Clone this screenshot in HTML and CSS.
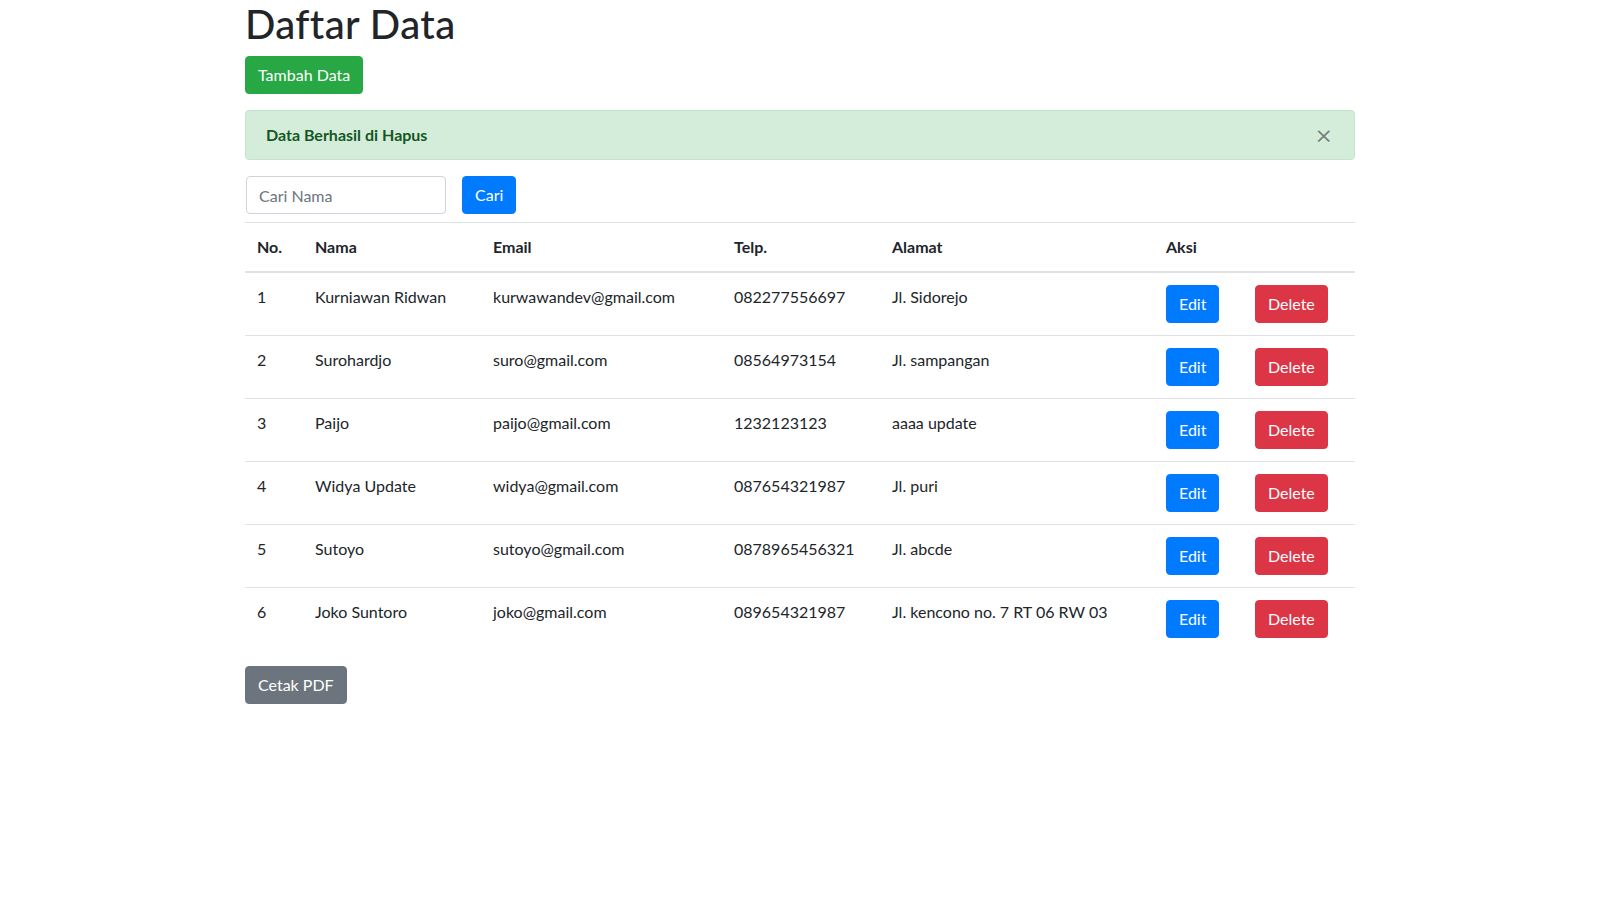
FILE: index.html
```html
<!DOCTYPE html>
<html lang="id">
<head>
<meta charset="utf-8">
<title>Daftar Data</title>
<link rel="stylesheet" href="styles.css">
</head>
<body>
<div class="container">
  <h1 class="title">Daftar Data</h1>
  <a class="btn btn-success">Tambah Data</a>

  <div class="alert">
    <strong>Data Berhasil di Hapus</strong>
    <button class="close" type="button">&times;</button>
  </div>

  <form class="search">
    <input class="form-control" type="text" placeholder="Cari Nama">
    <button class="btn btn-primary" type="button">Cari</button>
  </form>

  <table class="table">
    <colgroup>
      <col class="c-no"><col class="c-nama"><col class="c-email"><col class="c-telp"><col class="c-alamat"><col class="c-edit"><col class="c-del">
    </colgroup>
    <thead>
      <tr><th>No.</th><th>Nama</th><th>Email</th><th>Telp.</th><th>Alamat</th><th colspan="2">Aksi</th></tr>
    </thead>
    <tbody>
      <tr><td>1</td><td>Kurniawan Ridwan</td><td>kurwawandev@gmail.com</td><td>082277556697</td><td>Jl. Sidorejo</td><td><a class="btn btn-primary">Edit</a></td><td><a class="btn btn-danger">Delete</a></td></tr>
      <tr><td>2</td><td>Surohardjo</td><td>suro@gmail.com</td><td>08564973154</td><td>Jl. sampangan</td><td><a class="btn btn-primary">Edit</a></td><td><a class="btn btn-danger">Delete</a></td></tr>
      <tr><td>3</td><td>Paijo</td><td>paijo@gmail.com</td><td>1232123123</td><td>aaaa update</td><td><a class="btn btn-primary">Edit</a></td><td><a class="btn btn-danger">Delete</a></td></tr>
      <tr><td>4</td><td>Widya Update</td><td>widya@gmail.com</td><td>087654321987</td><td>Jl. puri</td><td><a class="btn btn-primary">Edit</a></td><td><a class="btn btn-danger">Delete</a></td></tr>
      <tr><td>5</td><td>Sutoyo</td><td>sutoyo@gmail.com</td><td>0878965456321</td><td>Jl. abcde</td><td><a class="btn btn-primary">Edit</a></td><td><a class="btn btn-danger">Delete</a></td></tr>
      <tr><td>6</td><td>Joko Suntoro</td><td>joko@gmail.com</td><td>089654321987</td><td>Jl. kencono no. 7 RT 06 RW 03</td><td><a class="btn btn-primary">Edit</a></td><td><a class="btn btn-danger">Delete</a></td></tr>
    </tbody>
  </table>

  <a class="btn btn-secondary">Cetak PDF</a>
</div>
</body>
</html>
```

FILE: styles.css
```css
* { box-sizing: border-box; }
html, body { margin: 0; padding: 0; background: #fff; }
body {
  font-family: "Lato", "Open Sans", "Noto Sans", sans-serif;
  font-size: 16px;
  line-height: 1.5;
  color: #212529;
}
.container {
  max-width: 1140px;
  margin: 0 auto;
  padding: 0 15px;
}
.title {
  margin: 0 0 8px;
  font-size: 40px;
  font-weight: 500;
  line-height: 1.2;
  letter-spacing: 0.4px;
}
.btn {
  display: inline-block;
  font-size: 16px;
  line-height: 24px;
  padding: 6px 12px;
  border: 1px solid transparent;
  border-radius: 4px;
  color: #fff;
  font-family: inherit;
  text-decoration: none;
  cursor: pointer;
  vertical-align: middle;
}
.btn-success { background: #28a745; border-color: #28a745; }
.btn-primary { background: #007bff; border-color: #007bff; }
.btn-danger { background: #dc3545; border-color: #dc3545; }
.btn-secondary { background: #6c757d; border-color: #6c757d; }

.alert {
  position: relative;
  margin: 16px 0;
  padding: 12px 64px 12px 20px;
  background: #d4edda;
  border: 1px solid #c3e6cb;
  border-radius: 4px;
  color: #155724;
}
.alert strong { font-weight: 700; }
.close {
  position: absolute;
  top: 2px;
  right: 1px;
  padding: 12px 20px;
  background: transparent;
  border: 0;
  font-family: "DejaVu Sans", sans-serif;
  font-size: 22px;
  font-weight: 400;
  line-height: 1;
  color: #000;
  opacity: .45;
  text-shadow: 0 1px 0 #fff;
  cursor: pointer;
}

.search {
  display: flex;
  align-items: center;
  margin: 0 0 8px;
}
.form-control {
  width: 200px;
  height: 38px;
  margin: 0 16px 0 1px;
  padding: 6px 12px;
  font-family: inherit;
  font-size: 16px;
  line-height: 24px;
  color: #495057;
  background: #fff;
  border: 1px solid #ced4da;
  border-radius: 4px;
}
.form-control::placeholder { color: #6c757d; opacity: 1; }

.table {
  width: 100%;
  margin-bottom: 16px;
  border-collapse: collapse;
  table-layout: fixed;
}
.c-no { width: 58px; }
.c-nama { width: 178px; }
.c-email { width: 241px; }
.c-telp { width: 158px; }
.c-alamat { width: 274px; }
.c-edit { width: 89px; }
.c-del { width: 112px; }
.table th, .table td {
  padding: 12px;
  text-align: left;
  vertical-align: top;
  border-top: 1px solid #dee2e6;
  white-space: nowrap;
}
.table th { font-weight: 700; }
.table thead th {
  vertical-align: bottom;
  border-bottom: 2px solid #dee2e6;
}
.table tbody tr:last-child td { border-bottom: 0; }
```
